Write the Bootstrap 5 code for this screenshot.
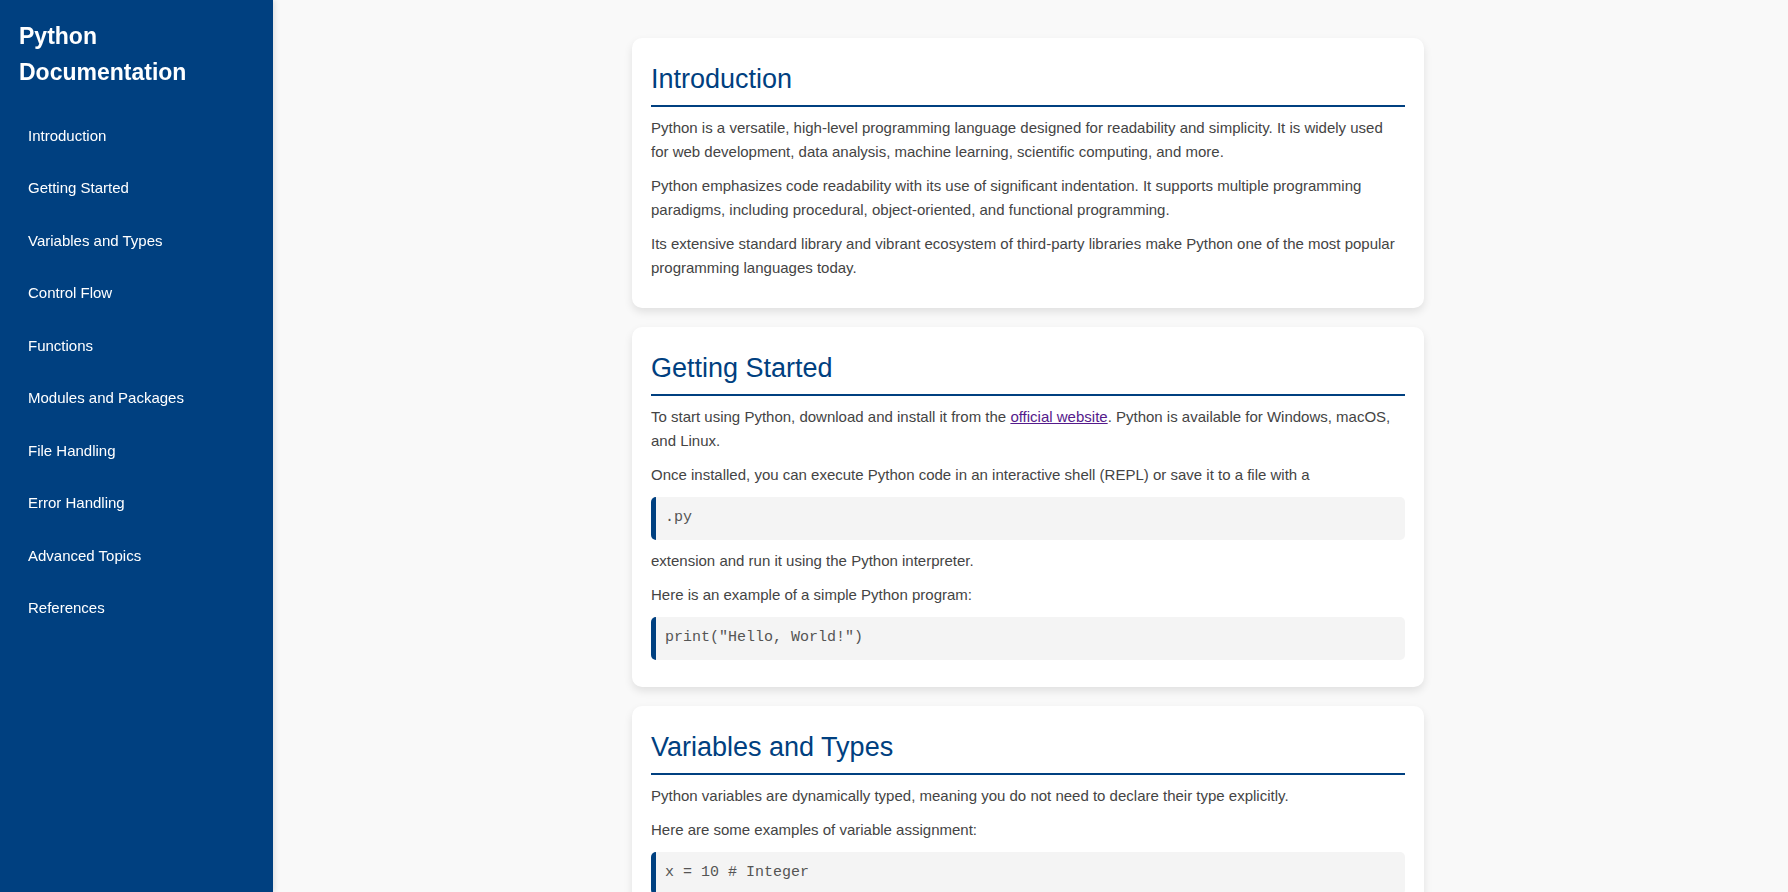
<!DOCTYPE html>
<html lang="en">
<head>
<meta charset="utf-8">
<meta name="viewport" content="width=device-width, initial-scale=1">
<title>Python Documentation</title>
<link href="https://cdn.jsdelivr.net/npm/bootstrap@5.3.0/dist/css/bootstrap.min.css" rel="stylesheet">
<style>
  body { font-family: "Liberation Sans", Arial, sans-serif; font-size: 15px; line-height: 24px; color: #444; background: #f9f9f9; }
  .sidebar { width: 273px; padding: 18px 19px; background: #004080; box-shadow: 2px 0 5px rgba(0, 0, 0, .1); }
  .sidebar h1 { font-size: 23px; line-height: 36px; margin-bottom: 24px; }
  .sidebar ul { min-height: 515px; }
  .sidebar .nav-link { padding: 9px; line-height: 25px; color: #fff; border-radius: 5px; }
  .sidebar .nav-link:hover { background: #0059b3; }
  main { margin-left: 268px; padding: 38px 19px; }
  .doc-column { max-width: 792px; gap: 19px; }
  .doc-section { padding: 19px 19px 18px; background: #fff; border-radius: 10px; box-shadow: 0 4px 8px rgba(0, 0, 0, .1); }
  .doc-section h2 { font-size: 27px; line-height: 45px; font-weight: 400; color: #004080; padding-bottom: 3px; margin-bottom: 9px; border-bottom: 2px solid #004080; }
  .doc-section p { padding-right: 4px; margin-bottom: 10px; }
  .doc-section p a { color: #551a8b; }
  .doc-section pre { font-family: "Liberation Mono", "Courier New", monospace; font-size: 15px; line-height: 24px; color: #555; padding: 9px 9px 10px; margin-bottom: 9px; background: #f4f4f4; border-left: 5px solid #004080; border-radius: 5px; }
  .doc-section pre code { font-family: inherit; font-size: inherit; }
</style>
</head>
<body>
<nav class="sidebar position-fixed top-0 start-0 vh-100 overflow-auto" aria-label="Documentation">
  <h1 class="fw-bold text-white">Python Documentation</h1>
  <ul class="nav flex-column flex-nowrap justify-content-between">
    <li class="nav-item"><a class="nav-link" href="#introduction">Introduction</a></li>
    <li class="nav-item"><a class="nav-link" href="#getting-started">Getting Started</a></li>
    <li class="nav-item"><a class="nav-link" href="#variables">Variables and Types</a></li>
    <li class="nav-item"><a class="nav-link" href="#control-flow">Control Flow</a></li>
    <li class="nav-item"><a class="nav-link" href="#functions">Functions</a></li>
    <li class="nav-item"><a class="nav-link" href="#modules">Modules and Packages</a></li>
    <li class="nav-item"><a class="nav-link" href="#files">File Handling</a></li>
    <li class="nav-item"><a class="nav-link" href="#errors">Error Handling</a></li>
    <li class="nav-item"><a class="nav-link" href="#advanced">Advanced Topics</a></li>
    <li class="nav-item"><a class="nav-link" href="#references">References</a></li>
  </ul>
</nav>
<main>
  <div class="doc-column d-flex flex-column mx-auto">
    <section class="doc-section" id="introduction">
      <h2>Introduction</h2>
      <p>Python is a versatile, high-level programming language designed for readability and simplicity. It is widely used for web development, data analysis, machine learning, scientific computing, and more.</p>
      <p>Python emphasizes code readability with its use of significant indentation. It supports multiple programming paradigms, including procedural, object-oriented, and functional programming.</p>
      <p>Its extensive standard library and vibrant ecosystem of third-party libraries make Python one of the most popular programming languages today.</p>
    </section>
    <section class="doc-section" id="getting-started">
      <h2>Getting Started</h2>
      <p>To start using Python, download and install it from the <a href="https://www.python.org/">official website</a>. Python is available for Windows, macOS, and Linux.</p>
      <p>Once installed, you can execute Python code in an interactive shell (REPL) or save it to a file with a</p>
      <pre><code>.py</code></pre>
      <p>extension and run it using the Python interpreter.</p>
      <p>Here is an example of a simple Python program:</p>
      <pre><code>print("Hello, World!")</code></pre>
    </section>
    <section class="doc-section" id="variables">
      <h2>Variables and Types</h2>
      <p>Python variables are dynamically typed, meaning you do not need to declare their type explicitly.</p>
      <p>Here are some examples of variable assignment:</p>
      <pre><code>x = 10 # Integer</code></pre>
    </section>
  </div>
</main>
<script src="https://cdn.jsdelivr.net/npm/bootstrap@5.3.0/dist/js/bootstrap.bundle.min.js"></script>
</body>
</html>
